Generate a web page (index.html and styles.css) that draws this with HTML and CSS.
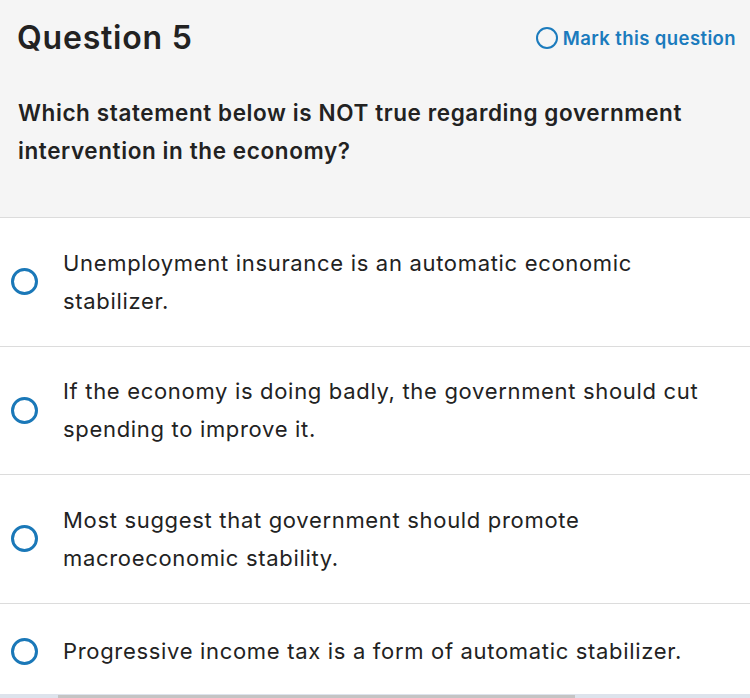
FILE: index.html
```html
<!DOCTYPE html>
<html>
<head>
<meta charset="utf-8">
<link rel="stylesheet" href="styles.css">
</head>
<body>
<div class="page">
  <div class="header">
    <div class="top">
      <h1 class="title">Question 5</h1>
      <div class="mark"><span class="mark-circle"></span><span class="mark-text">Mark this question</span></div>
    </div>
    <p class="prompt">Which statement below is NOT true regarding government intervention in the economy?</p>
  </div>
  <div class="option"><span class="radio"></span><span class="opt-text">Unemployment insurance is an automatic economic stabilizer.</span></div>
  <div class="option"><span class="radio"></span><span class="opt-text">If the economy is doing badly, the government should cut spending to improve it.</span></div>
  <div class="option"><span class="radio"></span><span class="opt-text">Most suggest that government should promote macroeconomic stability.</span></div>
  <div class="option last"><span class="radio"></span><span class="opt-text">Progressive income tax is a form of automatic stabilizer.</span></div>
</div>
<div class="scrollbar"><div class="thumb"></div></div>
</body>
</html>
```

FILE: styles.css
```css
* { box-sizing: border-box; }
html, body { margin: 0; padding: 0; }
body {
  width: 750px;
  height: 698px;
  overflow: hidden;
  background: #fff;
  font-family: Inter, "Liberation Sans", sans-serif;
  color: #222;
  position: relative;
}
.header {
  background: #f5f5f5;
  border-bottom: 1px solid #dcdcdc;
  height: 218px;
  padding: 18px 14px 0 18px;
}
.top {
  display: flex;
  justify-content: space-between;
  align-items: center;
}
.title {
  margin: 0;
  font-size: 32px;
  letter-spacing: 0.8px;
  font-weight: 600;
  line-height: 40px;
  margin-left: -1px;
  color: #222;
}
.mark {
  display: flex;
  align-items: center;
  gap: 5px;
  color: #1b7bbd;
  font-size: 18.5px;
  letter-spacing: 0.4px;
  font-weight: 600;
}
.mark-circle {
  width: 22px;
  height: 22px;
  border: 2.5px solid #1b7bbd;
  border-radius: 50%;
}
.prompt {
  margin: 36px 0 0 0;
  font-size: 22.5px;
  letter-spacing: 0.6px;
  font-weight: 600;
  line-height: 38px;
  color: #222;
}
.option {
  display: flex;
  align-items: center;
  height: 128.5px;
  border-bottom: 1px solid #dcdcdc;
  padding: 0 36px 0 11px;
}
.option.last { border-bottom: none; height: 95px; }
.radio {
  flex: none;
  width: 27px;
  height: 27px;
  border: 3px solid #1a78b8;
  border-radius: 50%;
  margin-right: 25px;
}
.opt-text {
  font-size: 22px;
  letter-spacing: 0.68px;
  line-height: 38px;
  color: #222;
}
.scrollbar {
  position: absolute;
  left: 0;
  bottom: 0;
  width: 750px;
  height: 4px;
  background: #dde3ec;
}
.thumb {
  position: absolute;
  left: 58px;
  top: 1px;
  width: 517px;
  height: 3px;
  background: #c4c4c4;
}
```
